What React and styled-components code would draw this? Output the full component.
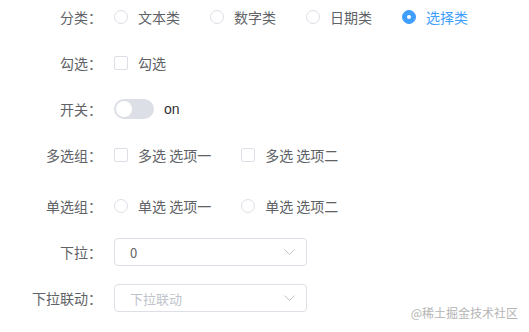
import styled, { createGlobalStyle } from 'styled-components'

const GlobalStyle = createGlobalStyle`
  html, body {
    margin: 0;
    padding: 0;
    background: #fff;
  }
  body {
    font-family: "Noto Sans CJK SC", "Noto Sans", "Liberation Sans", sans-serif;
    font-size: 14px;
    color: #606266;
  }
`

const Page = styled.div`
  position: relative;
  width: 529px;
  height: 332px;
  overflow: hidden;
  padding-top: 3px;
  box-sizing: border-box;
`

const FormItem = styled.div`
  display: flex;
  align-items: center;
  height: 28px;
  margin-bottom: ${p => (p.$extra ? 23 : 18)}px;
`

const Label = styled.label`
  width: 114px;
  box-sizing: border-box;
  padding-right: 12px;
  text-align: right;
  color: #606266;
  font-size: 14px;
  line-height: 28px;
  flex-shrink: 0;
`

const Content = styled.div`
  display: flex;
  align-items: center;
`

const Option = styled.span`
  display: inline-flex;
  align-items: center;
  margin-right: 30px;
  color: ${p => (p.$checked ? '#409eff' : '#606266')};
  font-size: 14px;
  white-space: nowrap;
`

const RadioDot = styled.span`
  width: 14px;
  height: 14px;
  box-sizing: border-box;
  border-radius: 50%;
  border: 1px solid ${p => (p.$checked ? '#409eff' : '#dcdfe6')};
  background: ${p => (p.$checked ? '#409eff' : '#fff')};
  display: inline-flex;
  align-items: center;
  justify-content: center;
  margin-right: 10px;

  &::after {
    content: '';
    width: 4px;
    height: 4px;
    border-radius: 50%;
    background: #fff;
    display: ${p => (p.$checked ? 'block' : 'none')};
  }
`

const CheckBox = styled.span`
  width: 14px;
  height: 14px;
  box-sizing: border-box;
  border-radius: 2px;
  border: 1px solid #dcdfe6;
  background: #fff;
  margin-right: 10px;
`

const SwitchTrack = styled.span`
  position: relative;
  width: 40px;
  height: 20px;
  border-radius: 10px;
  background: #dcdfe6;
  margin-right: 10px;

  &::after {
    content: '';
    position: absolute;
    top: 2px;
    left: 2px;
    width: 16px;
    height: 16px;
    border-radius: 50%;
    background: #fff;
  }
`

const SwitchText = styled.span`
  color: #303133;
  font-family: "Liberation Sans", "Noto Sans", sans-serif;
  font-size: 14px;
`

const Select = styled.div`
  width: 193px;
  height: 28px;
  box-sizing: border-box;
  border: 1px solid #dcdfe6;
  border-radius: 4px;
  display: flex;
  align-items: center;
  justify-content: space-between;
  padding: 0 11px 0 15px;
  font-size: 13px;
  color: ${p => (p.$placeholder ? '#c0c4cc' : '#606266')};
`

const Watermark = styled.div`
  position: absolute;
  right: 11px;
  bottom: 11px;
  font-size: 12px;
  color: #b4b4b4;
`

const Chevron = () => (
  <svg width="11" height="6" viewBox="0 0 11 6" fill="none">
    <polyline points="0.5,0.5 5.5,5.5 10.5,0.5" stroke="#c0c4cc" strokeWidth="1" />
  </svg>
)

const Radio = ({ label, checked }) => (
  <Option $checked={checked}>
    <RadioDot $checked={checked} />
    {label}
  </Option>
)

const Check = ({ label }) => (
  <Option>
    <CheckBox />
    {label}
  </Option>
)

const App = () => (
  <>
    <GlobalStyle />
    <Page>
      <FormItem>
        <Label>分类：</Label>
        <Content>
          <Radio label="文本类" />
          <Radio label="数字类" />
          <Radio label="日期类" />
          <Radio label="选择类" checked />
        </Content>
      </FormItem>

      <FormItem>
        <Label>勾选：</Label>
        <Content>
          <Check label="勾选" />
        </Content>
      </FormItem>

      <FormItem>
        <Label>开关：</Label>
        <Content>
          <SwitchTrack />
          <SwitchText>on</SwitchText>
        </Content>
      </FormItem>

      <FormItem $extra>
        <Label>多选组：</Label>
        <Content>
          <Check label="多选 选项一" />
          <Check label="多选 选项二" />
        </Content>
      </FormItem>

      <FormItem>
        <Label>单选组：</Label>
        <Content>
          <Radio label="单选 选项一" />
          <Radio label="单选 选项二" />
        </Content>
      </FormItem>

      <FormItem>
        <Label>下拉：</Label>
        <Select>
          <span>0</span>
          <Chevron />
        </Select>
      </FormItem>

      <FormItem>
        <Label>下拉联动：</Label>
        <Select $placeholder>
          <span>下拉联动</span>
          <Chevron />
        </Select>
      </FormItem>

      <Watermark>@稀土掘金技术社区</Watermark>
    </Page>
  </>
)

export default App
